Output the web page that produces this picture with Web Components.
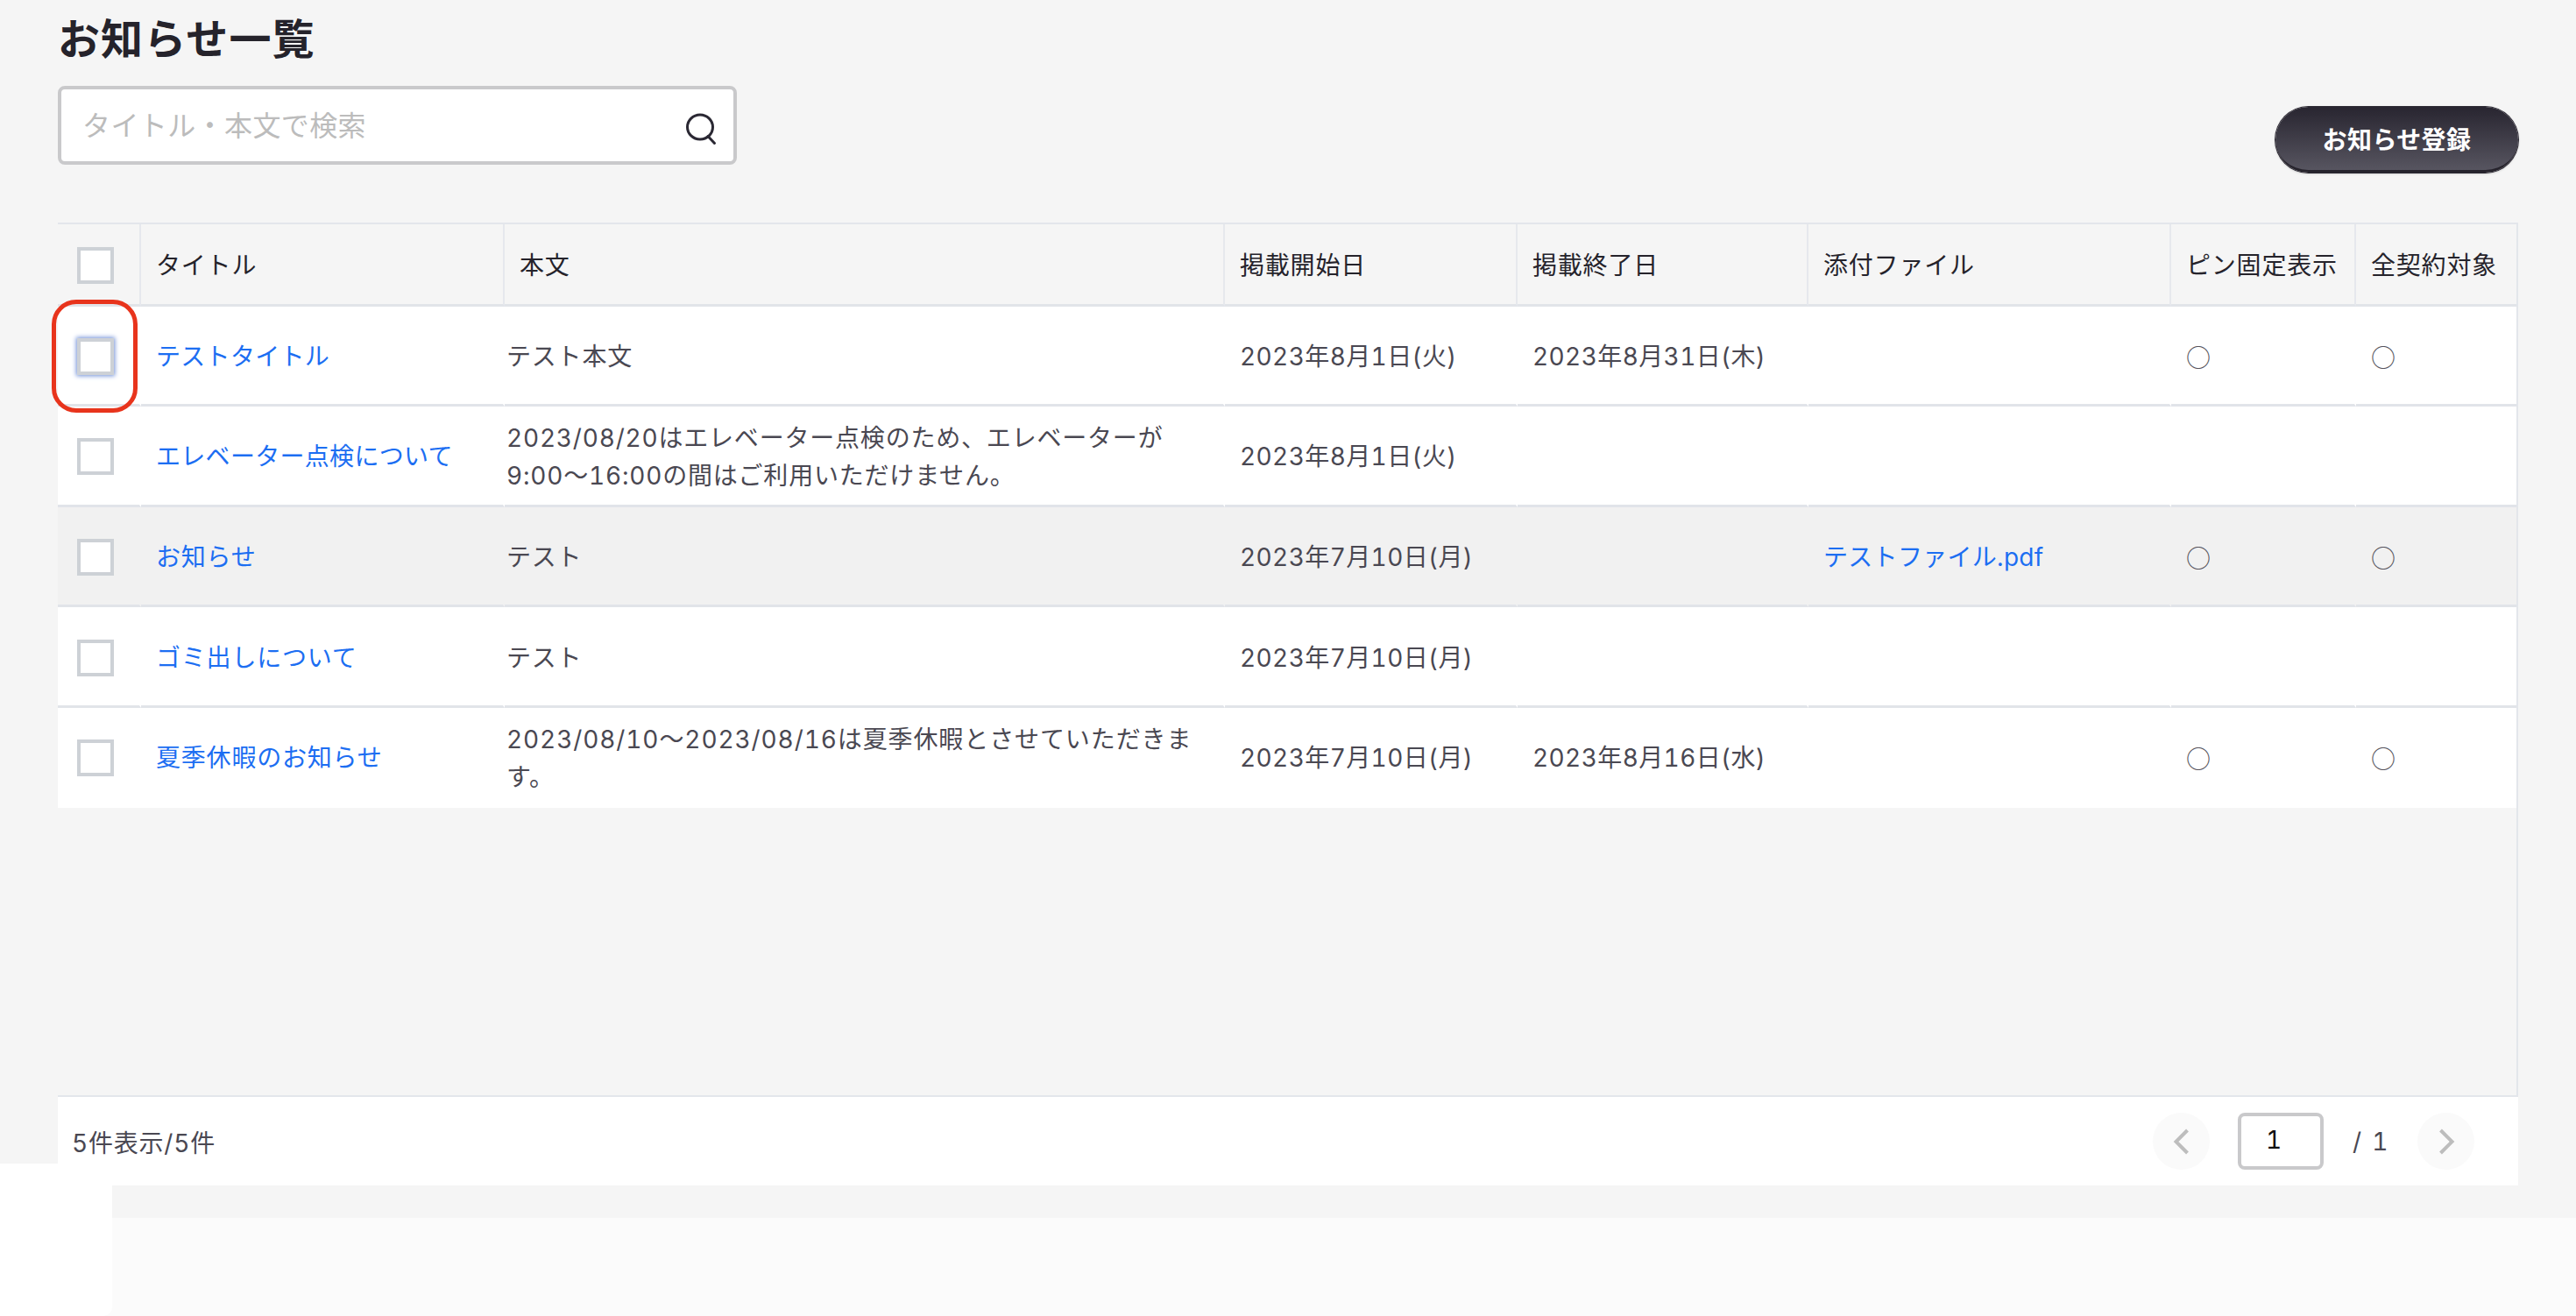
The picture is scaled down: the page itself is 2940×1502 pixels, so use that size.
<!DOCTYPE html>
<html lang="ja">
<head>
<meta charset="utf-8">
<title>お知らせ一覧</title>
<style>
  html, body { margin: 0; padding: 0; }
  body {
    position: relative;
    height: 1502px;
    overflow: hidden;
    background: #f5f5f5;
    font-family: Inter, "Noto Sans CJK JP", sans-serif;
    font-size: 28px;
    font-variant-numeric: tabular-nums;
    letter-spacing: 0.8px;
    color: #4a4852;
  }
  .kana { letter-spacing: 0.3px; }
  .wide { letter-spacing: 0.9px; }
</style>
</head>
<body>
<notice-page>
  <notice-toolbar title-text="お知らせ一覧" action="お知らせ登録" placeholder="タイトル・本文で検索"></notice-toolbar>
  <notice-table>
    <notice-row head>
      <row-cell center><check-box></check-box></row-cell>
      <row-cell>タイトル</row-cell>
      <row-cell>本文</row-cell>
      <row-cell>掲載開始日</row-cell>
      <row-cell>掲載終了日</row-cell>
      <row-cell>添付ファイル</row-cell>
      <row-cell>ピン固定表示</row-cell>
      <row-cell>全契約対象</row-cell>
    </notice-row>
    <notice-row>
      <row-cell center><check-box focused></check-box></row-cell>
      <row-cell><notice-link class="kana">テストタイトル</notice-link></row-cell>
      <row-cell tight>テスト本文</row-cell>
      <row-cell date>2023年8月1日(火)</row-cell>
      <row-cell date>2023年8月31日(木)</row-cell>
      <row-cell></row-cell>
      <row-cell mark>○</row-cell>
      <row-cell mark>○</row-cell>
    </notice-row>
    <notice-row>
      <row-cell center><check-box></check-box></row-cell>
      <row-cell><notice-link class="kana">エレベーター点検について</notice-link></row-cell>
      <row-cell tight>2023/08/20はエレベーター点検のため、エレベーターが<br>9:00〜16:00の間はご利用いただけません。</row-cell>
      <row-cell date>2023年8月1日(火)</row-cell>
      <row-cell></row-cell>
      <row-cell></row-cell>
      <row-cell></row-cell>
      <row-cell></row-cell>
    </notice-row>
    <notice-row hover>
      <row-cell center><check-box></check-box></row-cell>
      <row-cell><notice-link>お知らせ</notice-link></row-cell>
      <row-cell tight>テスト</row-cell>
      <row-cell date>2023年7月10日(月)</row-cell>
      <row-cell></row-cell>
      <row-cell><notice-link class="kana">テストファイル.pdf</notice-link></row-cell>
      <row-cell mark>○</row-cell>
      <row-cell mark>○</row-cell>
    </notice-row>
    <notice-row>
      <row-cell center><check-box></check-box></row-cell>
      <row-cell><notice-link>ゴミ出しについて</notice-link></row-cell>
      <row-cell tight>テスト</row-cell>
      <row-cell date>2023年7月10日(月)</row-cell>
      <row-cell></row-cell>
      <row-cell></row-cell>
      <row-cell></row-cell>
      <row-cell></row-cell>
    </notice-row>
    <notice-row last>
      <row-cell center><check-box></check-box></row-cell>
      <row-cell><notice-link>夏季休暇のお知らせ</notice-link></row-cell>
      <row-cell tight><span class="wide">2023/08/10〜2023/08/16は夏季休暇とさせていただきま</span><br>す。</row-cell>
      <row-cell date>2023年7月10日(月)</row-cell>
      <row-cell date>2023年8月16日(水)</row-cell>
      <row-cell></row-cell>
      <row-cell mark>○</row-cell>
      <row-cell mark>○</row-cell>
    </notice-row>
  </notice-table>
  <notice-footer summary="5件表示/5件" page="1" total="1"></notice-footer>
</notice-page>
<focus-ring></focus-ring>
<corner-patch></corner-patch>

<script>
class NoticePage extends HTMLElement {
  constructor() {
    super();
    this.attachShadow({ mode: 'open' });
    this.shadowRoot.innerHTML = `
    <style>
    :host { display: block; }
    .main { padding: 0 66px; height: 1353px; box-sizing: border-box; }
    .gap { height: 37px; }
    .under { height: 112px; background: #fbfbfb; }
    </style>
    <div class="main"><slot></slot></div>
    <div class="gap"></div>
    <div class="under"></div>
    `;
  }
}

class NoticeToolbar extends HTMLElement {
  constructor() {
    super();
    const title = this.getAttribute('title-text') || '';
    const action = this.getAttribute('action') || '';
    const placeholder = this.getAttribute('placeholder') || '';
    this.attachShadow({ mode: 'open' });
    this.shadowRoot.innerHTML = `
    <style>
    :host { display: block; }
    h1 {
      margin: 0 0 8px;
      height: 90px;
      font-size: 48px;
      line-height: 90px;
      font-weight: 700;
      letter-spacing: 1.1px;
      color: #25232b;
    }
    .row {
      display: flex;
      justify-content: space-between;
      align-items: flex-start;
      margin-bottom: 57px;
    }
    .search {
      display: flex;
      align-items: center;
      justify-content: space-between;
      box-sizing: border-box;
      width: 775px;
      height: 90px;
      padding: 0 17px 0 24px;
      background: #fff;
      border: 4px solid #c9c9cb;
      border-radius: 8px;
      color: #bcbcbc;
      font-size: 32px;
      letter-spacing: 0.4px;
    }
    .search span { position: relative; top: -2px; }
    .search svg { display: block; margin-top: 8px; }
    button {
      display: block;
      box-sizing: border-box;
      width: 277px;
      height: 75px;
      margin-top: 24px;
      padding: 0;
      border: 0;
      border-bottom: 3px solid #26232c;
      border-radius: 38px;
      background: linear-gradient(#282530, #575560);
      box-shadow: 0 0 0 1px #2c2933, 0 1px 3px rgba(0,0,0,.25);
      color: #fff;
      font: inherit;
      font-size: 28px;
      font-weight: 700;
      letter-spacing: 0.4px;
    }
    </style>
    <h1>${title}</h1>
    <div class="row">
      <div class="search">
        <span>${placeholder}</span>
        <svg width="38" height="38" viewBox="0 0 38 38" fill="none" stroke="#2a2833" stroke-width="3">
          <ellipse cx="17" cy="17" rx="14.5" ry="14"/>
          <path d="M26 27.5 L33.5 35.5" stroke-linecap="round"/>
        </svg>
      </div>
      <button>${action}</button>
    </div>
    `;
  }
}

class NoticeTable extends HTMLElement {
  constructor() {
    super();
    this.attachShadow({ mode: 'open' });
    this.shadowRoot.innerHTML = `
    <style>
    :host {
      display: block;
      box-sizing: border-box;
      height: 997.5px;
      border-top: 2px solid #e3e6eb;
      border-right: 2px solid #e3e6eb;
      border-bottom: 2px solid #e3e6eb;
    }
    </style>
    <slot></slot>
    `;
  }
}

class NoticeRow extends HTMLElement {
  constructor() {
    super();
    this.attachShadow({ mode: 'open' });
    this.shadowRoot.innerHTML = `
    <style>
    :host {
      display: grid;
      grid-template-columns: 95px 415px 822px 334px 332px 414px 211px 183px;
      height: 114.6px;
      background: #fff;
      --sep: #fff;
      --rule: #e1e4e9;
    }
    :host([head]) {
      height: 93.5px;
      background: transparent;
      color: #25232b;
      --sep: #e6e8ed;
    }
    :host([hover]) { background: #f1f1f1; --sep: #f1f1f1; }
    :host([last]) { --rule: transparent; }
    </style>
    <slot></slot>
    `;
  }
}

class RowCell extends HTMLElement {
  constructor() {
    super();
    this.attachShadow({ mode: 'open' });
    this.shadowRoot.innerHTML = `
    <style>
    :host {
      display: flex;
      align-items: center;
      box-sizing: border-box;
      padding: 4px 0 0 17px;
      border-right: 2px solid var(--sep);
      border-bottom: 3px solid var(--rule);
      line-height: 43px;
      white-space: nowrap;
    }
    :host(:last-child) { border-right: 0; }
    :host([tight]) { padding-left: 2px; }
    :host([date]) { letter-spacing: 0.4px; }
    :host([center]) { justify-content: center; padding: 3px 8px 0 0; }
    :host([mark]) { font-family: "Noto Sans CJK JP", sans-serif; color: #55535c; }
    </style>
    <div><slot></slot></div>
    `;
  }
}

class NoticeLink extends HTMLElement {
  constructor() {
    super();
    this.attachShadow({ mode: 'open' });
    this.shadowRoot.innerHTML = `
    <style>
    :host { display: inline; color: #1c6ef2; cursor: pointer; }
    </style>
    <slot></slot>
    `;
  }
}

class CheckBox extends HTMLElement {
  constructor() {
    super();
    this.attachShadow({ mode: 'open' });
    this.shadowRoot.innerHTML = `
    <style>
    :host {
      display: block;
      box-sizing: border-box;
      width: 42px;
      height: 42px;
      background: #fff;
      border: 4px solid #cdd1d6;
    }
    :host([focused]) { box-shadow: 0 0 5px 1px #6f8fd8; }
    </style>
    `;
  }
}

class NoticeFooter extends HTMLElement {
  constructor() {
    super();
    const summary = this.getAttribute('summary') || '';
    const page = this.getAttribute('page') || '1';
    const total = this.getAttribute('total') || '1';
    this.attachShadow({ mode: 'open' });
    this.shadowRoot.innerHTML = `
    <style>
    :host {
      display: flex;
      align-items: center;
      justify-content: space-between;
      box-sizing: border-box;
      height: 101.5px;
      padding: 1px 50px 0 16px;
      background: #fff;
    }
    .pager { display: flex; align-items: center; }
    .round {
      display: flex;
      align-items: center;
      justify-content: center;
      width: 65px;
      height: 65px;
      border-radius: 50%;
      background: #fafafa;
    }
    .input {
      box-sizing: border-box;
      width: 98px;
      height: 65px;
      margin: 0 33px 0 32px;
      padding-left: 28px;
      border: 4px solid #c9c9cb;
      border-radius: 8px;
      color: #111;
      line-height: 55px;
    }
    .total { width: 74px; white-space: nowrap; word-spacing: 3px; }
    </style>
    <span>${summary}</span>
    <div class="pager">
      <div class="round">
        <svg width="20" height="30" viewBox="0 0 20 30" fill="none" stroke="#bdbdbd" stroke-width="4"><path d="M16.5 2 L3.5 15 L16.5 28"/></svg>
      </div>
      <div class="input">${page}</div>
      <span class="total">/ ${total}</span>
      <div class="round">
        <svg width="20" height="30" viewBox="0 0 20 30" fill="none" stroke="#bdbdbd" stroke-width="4"><path d="M3.5 2 L16.5 15 L3.5 28"/></svg>
      </div>
    </div>
    `;
  }
}

// red marker drawn over the first row's checkbox
class FocusRing extends HTMLElement {
  constructor() {
    super();
    this.attachShadow({ mode: 'open' });
    this.shadowRoot.innerHTML = `
    <style>
    :host {
      position: absolute;
      left: 59px;
      top: 342px;
      box-sizing: border-box;
      width: 98px;
      height: 129px;
      border: 5px solid #e8341c;
      border-radius: 28px;
    }
    </style>
    `;
  }
}

// white block covering the lower left corner of the capture
class CornerPatch extends HTMLElement {
  constructor() {
    super();
    this.attachShadow({ mode: 'open' });
    this.shadowRoot.innerHTML = `
    <style>
    :host {
      position: absolute;
      left: 0;
      top: 1328px;
      width: 128px;
      height: 174px;
      background: #fff;
      border-bottom-right-radius: 10px;
    }
    </style>
    `;
  }
}

customElements.define('notice-page', NoticePage);
customElements.define('notice-toolbar', NoticeToolbar);
customElements.define('notice-table', NoticeTable);
customElements.define('notice-row', NoticeRow);
customElements.define('row-cell', RowCell);
customElements.define('notice-link', NoticeLink);
customElements.define('check-box', CheckBox);
customElements.define('notice-footer', NoticeFooter);
customElements.define('focus-ring', FocusRing);
customElements.define('corner-patch', CornerPatch);
</script>
</body>
</html>
